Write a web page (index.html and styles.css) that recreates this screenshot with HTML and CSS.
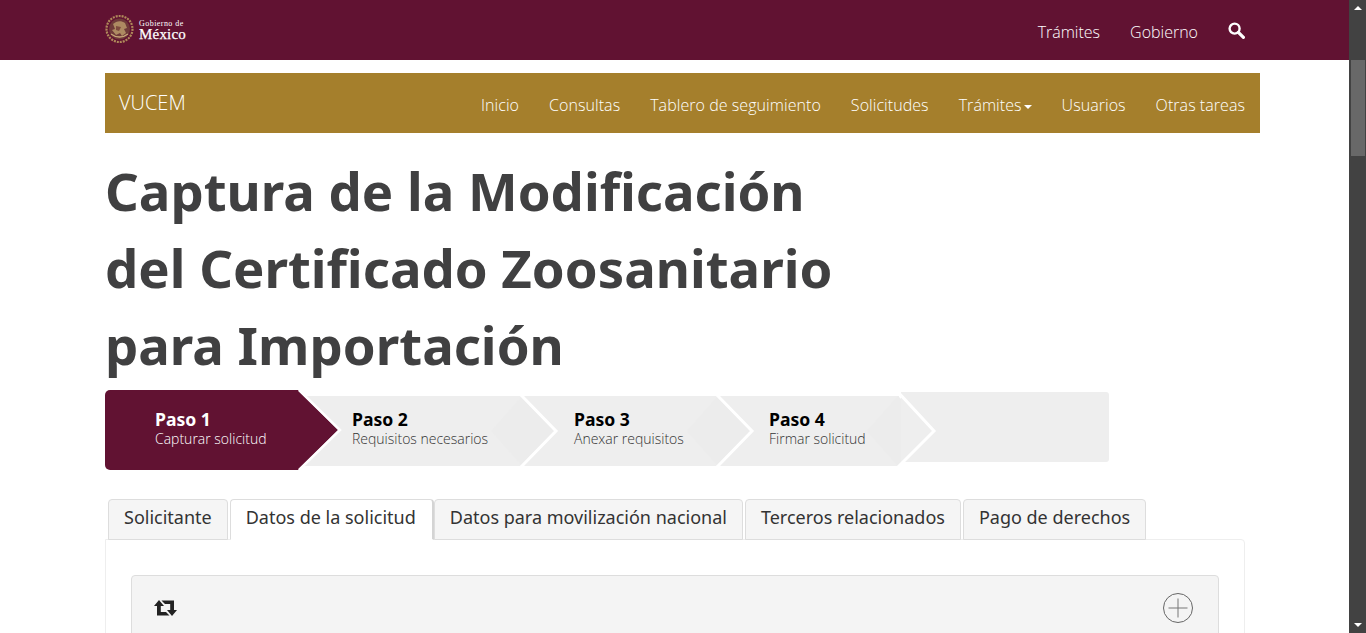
FILE: index.html
```html
<!DOCTYPE html>
<html lang="es">
<head>
<meta charset="utf-8">
<title>VUCEM</title>
<link rel="stylesheet" href="styles.css">
</head>
<body>
<div class="window">
  <div class="page">
    <header class="topbar">
      <a class="logo" href="#">
        <svg class="emblem" width="29" height="30" viewBox="0 0 29 30" aria-hidden="true">
          <circle cx="14.500" cy="15" r="13" fill="none" stroke="#b08a5a" stroke-width="2.200" stroke-dasharray="2 1"/>
          <circle cx="14.500" cy="15" r="10.500" fill="#6f3a3a"/>
          <path d="M8 10c3-3 8-4 12-1l2 5-3 1 2 4-4 3-2-3-4 2-4-5 3-1z" fill="#ad8a62"/>
          <path d="M6 20c5 4 12 4 17 0" fill="none" stroke="#c9a679" stroke-width="1.300"/>
          <path d="M11 12l5 1-2 4-3-1z" fill="#7d4a3e"/>
        </svg>
        <span class="logo-text"><span class="logo-small">Gobierno de</span><span class="logo-big">México</span></span>
      </a>
      <nav class="topnav">
        <a href="#">Trámites</a>
        <a href="#">Gobierno</a>
        <a href="#" class="search" aria-label="Buscar">
          <svg width="17" height="17" viewBox="0 0 17 17" aria-hidden="true">
            <circle cx="6.600" cy="6.600" r="5" fill="none" stroke="#fff" stroke-width="2.400"/>
            <path d="M10.400 10.400l5 5" stroke="#fff" stroke-width="3.200" stroke-linecap="round"/>
          </svg>
        </a>
      </nav>
    </header>

    <div class="container">
      <nav class="subnav">
        <a class="brand" href="#">VUCEM</a>
        <div class="subnav-links">
          <a href="#">Inicio</a>
          <a href="#">Consultas</a>
          <a href="#">Tablero de seguimiento</a>
          <a href="#">Solicitudes</a>
          <a href="#" class="dropdown">Trámites<span class="caret"></span></a>
          <a href="#">Usuarios</a>
          <a href="#">Otras tareas</a>
        </div>
      </nav>

      <h1 class="title">Captura de la Modificación<br>del Certificado Zoosanitario<br>para Importación</h1>

      <div class="steps">
        <svg class="steps-bg" width="1004" height="80" viewBox="0 0 1004 80" aria-hidden="true">
          <rect x="190" y="6" width="604" height="70" fill="#eee"/>
          <path d="M386 41l31-35 35 35-35 35z" fill="#ececec"/>
          <path d="M582 41l31-35 35 35-35 35z" fill="#ececec"/>
          <path d="M762 41l31-35 35 35-35 35z" fill="#ececec"/>
          <path d="M796 2h205a3 3 0 0 1 3 3v64a3 3 0 0 1-3 3H796z" fill="#eee"/>
          <path d="M416 5l35 36-35 36M612 5l35 36-35 36M793 2l36 39-36 36" fill="none" stroke="#fff" stroke-width="3"/>
          <path d="M5 0H193L233 40 193 80H5a5 5 0 0 1-5-5V5a5 5 0 0 1 5-5z" fill="#611232"/>
          <path d="M194 0l41 40-41 40" fill="none" stroke="#fff" stroke-width="2.500"/>
        </svg>
        <div class="step step-active"><strong>Paso 1</strong><span>Capturar solicitud</span></div>
        <div class="step step-2"><strong>Paso 2</strong><span>Requisitos necesarios</span></div>
        <div class="step step-3"><strong>Paso 3</strong><span>Anexar requisitos</span></div>
        <div class="step step-4"><strong>Paso 4</strong><span>Firmar solicitud</span></div>
      </div>

      <div class="tabs-wrap">
        <ul class="tabs">
          <li><a href="#">Solicitante</a></li>
          <li class="active"><a href="#">Datos de la solicitud</a></li>
          <li><a href="#">Datos para movilización nacional</a></li>
          <li><a href="#">Terceros relacionados</a></li>
          <li><a href="#">Pago de derechos</a></li>
        </ul>
        <div class="tab-panel">
          <div class="accordion">
            <svg width="23" height="16" viewBox="0 0 23 16" aria-hidden="true">
              <path d="M5 0L0 6h3v9.500h12.500l-3.500-3.500H6.800V6H10z" fill="#222"/>
              <path d="M18 16l5-6h-3V.5H7.500L11 4h5.200v6H13z" fill="#222"/>
            </svg>
            <svg width="32" height="32" viewBox="0 0 32 32" aria-hidden="true">
              <circle cx="16" cy="16" r="14.500" fill="none" stroke="#666" stroke-width="1"/>
              <path d="M16 6.500v19M6.500 16h19" stroke="#777" stroke-width="1"/>
            </svg>
          </div>
        </div>
      </div>
    </div>
  </div>

  <aside class="scrollbar" aria-hidden="true">
    <span class="arrow-up"></span>
    <span class="thumb"></span>
    <span class="arrow-down"></span>
  </aside>
</div>
</body>
</html>
```
FILE: styles.css
```css
* { box-sizing: border-box; }
html, body { margin: 0; height: 100%; overflow: hidden; background: #fff; }
body { font-family: "Noto Sans", "Open Sans", sans-serif; color: #333; }
a { color: inherit; text-decoration: none; }

.window { display: flex; height: 633px; overflow: hidden; }
.page { flex: 1; min-width: 0; overflow: hidden; }

.topbar {
  height: 60px;
  background: #611232;
  display: flex;
  align-items: center;
  justify-content: space-between;
  padding: 0 104px 0 105px;
  color: #fff;
}
.logo { display: flex; align-items: center; gap: 5px; margin-top: -2px; }
.emblem { display: block; }
.logo-text { display: flex; flex-direction: column; font-family: "Liberation Serif", serif; color: #fff; padding-top: 2px; }
.logo-small { font-size: 8px; line-height: 8px; letter-spacing: .45px; }
.logo-big { font-size: 15px; line-height: 12px; letter-spacing: .2px; -webkit-text-stroke: .25px #fff; }
.topnav { display: flex; align-items: center; gap: 30px; font-family: "Open Sans", sans-serif; font-weight: 300; font-size: 16px; margin-top: 4px; }
.search { display: flex; margin-top: -3px; }

.container { padding: 13px 89px 0 105px; width: 1349px; }
.subnav {
  height: 60px;
  width: 1155px;
  background: #a57f2c;
  color: #fff;
  display: flex;
  align-items: center;
  justify-content: space-between;
  padding: 0 15px 0 14px;
  font-family: "Open Sans", sans-serif;
  font-weight: 300;
}
.brand { font-size: 20px; margin-top: -2px; }
.subnav-links { display: flex; gap: 30px; font-size: 16px; letter-spacing: .06px; margin-top: 4px; }
.caret {
  display: inline-block;
  width: 0;
  height: 0;
  margin-left: 2px;
  vertical-align: middle;
  border-top: 4px solid #fff;
  border-left: 4px solid transparent;
  border-right: 4px solid transparent;
}

.title {
  margin: 19px 0 0;
  font-size: 52.700px;
  line-height: 77px;
  font-weight: 700;
  color: #404041;
  white-space: nowrap;
}

.steps {
  position: relative;
  height: 80px;
  margin-top: 7px;
  display: flex;
  align-items: center;
}
.steps-bg { position: absolute; left: 0; top: 0; }
.step { position: relative; display: flex; flex-direction: column; color: #333; margin-top: -3px; }
.step strong { font-size: 17.600px; line-height: 20px; margin-bottom: 1px; color: #000; font-weight: 700; }
.step span { font-family: "Open Sans", sans-serif; font-weight: 300; font-size: 14px; line-height: 18px; }
.step-active { margin-left: 50px; color: #fff; width: 197px; }
.step-active strong { color: #fff; }
.step-2 { width: 222px; }
.step-3 { width: 195px; }

.tabs-wrap { margin-top: 29px; width: 1140px; }
.tabs { list-style: none; margin: 0 0 0 3px; padding: 0; display: flex; gap: 2px; position: relative; z-index: 1; }
.tabs a {
  display: block;
  height: 41px;
  padding: 0 15px;
  font-size: 18px;
  line-height: 35px;
  background: #f5f5f5;
  border: 1px solid #ddd;
  border-radius: 4px 4px 0 0;
}
.tabs .active { margin-right: -2px; }
.tabs .active a { background: #fff; border-bottom-color: #fff; border-right: 2px solid #d4d4d4; padding-right: 16px; }
.tab-panel {
  margin-top: -1px;
  height: 200px;
  padding: 35px 25px 0;
  border: 1px solid #eee;
  border-radius: 0 4px 0 0;
}
.accordion {
  height: 120px;
  background: #f4f4f4;
  border: 1px solid #ddd;
  border-radius: 4px;
  display: flex;
  align-items: flex-start;
  justify-content: space-between;
  padding: 16px 24px 0 22px;
}
.accordion svg:first-child { margin-top: 8px; }

.scrollbar {
  flex: 0 0 17px;
  background: #424242;
  position: relative;
  display: flex;
  flex-direction: column;
  align-items: center;
}
.thumb { position: absolute; left: 2px; right: 1px; top: 60px; height: 96px; background: #686868; }
.arrow-up, .arrow-down {
  position: absolute;
  width: 0;
  height: 0;
  border-left: 4px solid transparent;
  border-right: 4px solid transparent;
}
.arrow-up { top: 6px; border-bottom: 4px solid #fff; }
.arrow-down { bottom: 6px; border-top: 4px solid #fff; }
```
